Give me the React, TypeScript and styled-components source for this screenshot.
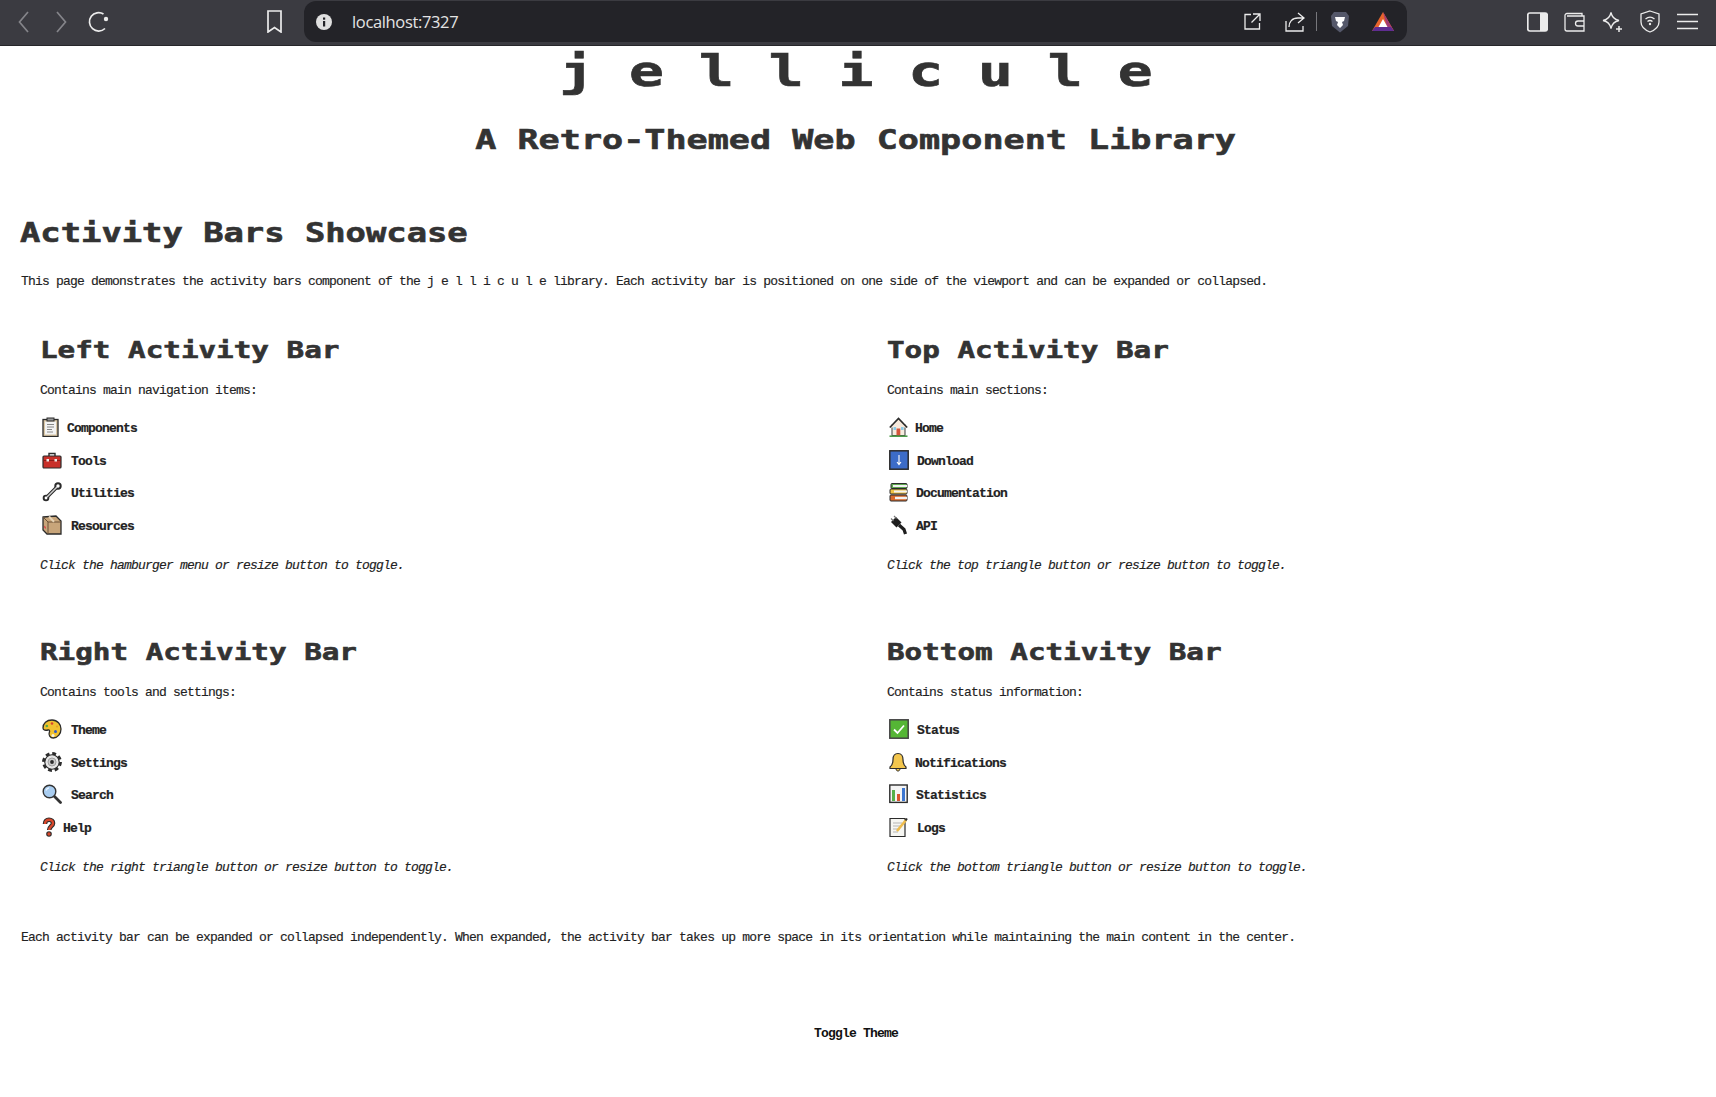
import React from "react";
import styled, { createGlobalStyle } from "styled-components";

const Global = createGlobalStyle`
  html, body { margin: 0; padding: 0; background: #fff; }
  body { font-family: "Liberation Mono", monospace; color: #222; }
`;

const Shell = styled.div`width: 1716px; min-height: 1097px; background: #fff; overflow: hidden;`;
const Toolbar = styled.header`
  height: 46px; box-sizing: border-box; background: #3b3b41; border-bottom: 1px solid #26262a; padding-bottom: 2px;
  display: flex; align-items: center; color: #e6e6e6;
`;
const Tool = styled.span<{ $w: number; $ml?: number; $dim?: boolean }>`
  display: flex; align-items: center; justify-content: center; flex: none;
  width: ${p => p.$w}px; margin-left: ${p => p.$ml ?? 0}px; color: ${p => (p.$dim ? "#85858a" : "#ececec")};
`;
const AddressBar = styled.div`
  flex: none; width: 1103px; height: 41px; margin-left: 21px; padding-right: 13px; box-sizing: border-box; background: #232328;
  border-radius: 12px; display: flex; align-items: center; color: #d8d8d8;
`;
const Url = styled.span`
  font: 16.5px "Open Sans", sans-serif; letter-spacing: -0.35px; color: #e4e4e4; margin-left: 20px; flex: 1;
`;
const Separator = styled.span`width: 1px; height: 19px; background: #77777c; margin-left: 11px; flex: none;`;

const Main = styled.main`display: flex; flex-direction: column; width: 1712px;`;
const Pixel = styled.span<{ $scale?: number; $origin?: string }>`
  display: inline-block; white-space: pre; transform: scaleX(${p => p.$scale ?? 1.3});
  transform-origin: ${p => p.$origin ?? "left"} center; -webkit-text-stroke: 0.6px #333;
`;
const Title = styled.h1`
  margin: 6px 0 0; height: 40px; text-align: center; color: #333;
  font: bold 42px/40px "DejaVu Sans Mono", monospace;
`;
const Subtitle = styled.h2`
  margin: 32px 0 0; height: 32px; text-align: center; color: #333;
  font: bold 27px/32px "DejaVu Sans Mono", monospace;
`;
const PageHeading = styled.h2`
  margin: 61px 0 0 20px; height: 32px; color: #333;
  font: bold 26px/32px "DejaVu Sans Mono", monospace;
`;
const Para = styled.p<{ $mt: number }>`
  margin: ${p => p.$mt}px 0 0 21px; height: 16px; white-space: pre; -webkit-text-stroke: 0.15px #222;
  font: 13px/16px "Liberation Mono", monospace; letter-spacing: -0.8px; color: #222;
`;
const Cards = styled.div`
  display: grid; grid-template-columns: 847px 847px; margin: 47px 0 0 20px; row-gap: 65px;
`;
const Card = styled.section`display: flex; flex-direction: column; padding-left: 20px;`;
const CardHeading = styled.h3`
  margin: 0; height: 26px; color: #333; font: bold 22.5px/26px "DejaVu Sans Mono", monospace;
`;
const CardText = styled.p`
  margin: 20px 0 0; height: 16px; white-space: pre; color: #222; -webkit-text-stroke: 0.15px #222;
  font: 13px/16px "Liberation Mono", monospace; letter-spacing: -0.8px;
`;
const List = styled.ul`list-style: none; margin: 14px 0 0; padding: 0;`;
const Row = styled.li`
  display: flex; align-items: center; height: 32.5px; color: #222; -webkit-text-stroke: 0.2px #222;
  font: bold 13px/16px "Liberation Mono", monospace; letter-spacing: -0.8px;
`;
const IconSlot = styled.span<{ $adv: number }>`
  display: flex; flex: none; width: ${p => p.$adv}px; padding-left: 2px; box-sizing: border-box; margin-top: -4px;
`;
const Note = styled.p`
  margin: 15px 0 0; height: 16px; white-space: pre; color: #222; -webkit-text-stroke: 0.15px #222;
  font: italic 13px/16px "Liberation Mono", monospace; letter-spacing: -0.8px;
`;
const ToggleWrap = styled.div`display: flex; justify-content: center; margin-top: 80px;`;
const Toggle = styled.button`
  border: 0; background: none; padding: 0; height: 16px; color: #111;
  font: bold 13px/16px "Liberation Mono", monospace; letter-spacing: -0.8px;
`;

const Svg = ({ children, w = 20, h = 20 }: { children: React.ReactNode; w?: number; h?: number }) => (
  <svg width={w} height={h} viewBox={`0 0 ${w} ${h}`} fill="none" style={{ display: "block" }}>{children}</svg>
);
const K = "#2b2b2b";

const Clipboard = () => <Svg w={17}><rect x="1" y="2.5" width="15" height="17" fill="#d9c6a5" stroke={K} strokeWidth="1.3" /><rect x="3" y="4.5" width="11" height="13" fill="#f3f3f3" /><rect x="5" y="1" width="7" height="3" fill="#999" stroke={K} /><path d="M5 7.5h7M5 10h7M5 12.5h5M5 15h6" stroke="#888" /></Svg>;
const Toolbox = () => <Svg><path d="M7 6V3.5h6V6" stroke={K} strokeWidth="1.4" /><rect x="1" y="6" width="18" height="12" rx="1" fill="#c8302a" stroke={K} strokeWidth="1.2" /><path d="M1 10.5h18" stroke="#8a1c18" /><rect x="4.5" y="9" width="2.5" height="2.5" fill="#eee" /><rect x="12.5" y="9" width="2.5" height="2.5" fill="#eee" /></Svg>;
const Wrench = () => <Svg><path d="M4.500 15.500 15.500 4.500" stroke={K} strokeWidth="3.600" strokeLinecap="round" /><circle cx="16" cy="4" r="3.700" fill={K} /><circle cx="4" cy="16" r="3.300" fill={K} /><path d="M5 15 15 5" stroke="#cfcfcf" strokeWidth="1.500" /><circle cx="16" cy="4" r="1.700" fill="#fff" /><circle cx="4" cy="16" r="1.400" fill="#fff" /></Svg>;
const Box = () => <Svg><path d="M1 2 14 1l5 5v13H5L1 15Z" fill="#c8a57a" stroke={K} strokeWidth="1.3" /><path d="M1 2l5 5h13M6 7v12" stroke="#6b5136" /><path d="M7 1.5 12 6.8" stroke="#e6d3b5" strokeWidth="2" /><path d="M2 10.5l2 1.5v2l-2-1.5Z" fill="#d9534f" /></Svg>;
const Home = () => <Svg w={19}><rect x="3" y="8" width="13" height="10.500" fill="#f6ecdf" stroke={K} strokeWidth=".9" /><path d="M.8 10.500 9.500 1.500 18.200 10.500" fill="#f6e9dc" stroke={K} strokeWidth="1.700" /><rect x="7.500" y="11.500" width="3.800" height="7" fill="#d4553a" /><rect x="4.500" y="10" width="2.600" height="3" fill="#8ccbe8" /><rect x="12" y="10" width="2.600" height="3" fill="#8ccbe8" /><path d="M.5 19.200h18" stroke="#4f9d4a" strokeWidth="1.600" /></Svg>;
const Download = () => <Svg><rect x=".8" y=".8" width="18.4" height="18.4" fill="#3c6cc8" stroke={K} strokeWidth="1.5" /><path d="M10 5v9M8 12l2 2.5 2-2.5" stroke="#fff" strokeWidth="1.1" /></Svg>;
const Books = () => <Svg w={19}><rect x="2" y="1.500" width="16" height="5" rx="1" fill="#5fa84f" stroke={K} /><rect x="4" y="3" width="14" height="2" fill="#f2f2f2" /><rect x="1" y="7" width="17" height="5" rx="1" fill="#f0c445" stroke={K} /><rect x="5" y="8.500" width="13" height="2" fill="#f2f2f2" /><rect x="1" y="13" width="17" height="6" rx="1" fill="#d96b2b" stroke={K} /><rect x="6" y="14.800" width="12" height="2.400" fill="#f2f2f2" /></Svg>;
const Plug = () => <Svg w={19}><path d="M4.500 4.500 10 10" stroke="#1e1e1e" strokeWidth="7" /><path d="M10 10 15 14.500 16.500 19" stroke="#1e1e1e" strokeWidth="3.200" /><path d="M2 3.500 4.500 6M5 1 7.500 3.500" stroke="#777" strokeWidth="1.200" /></Svg>;
const Palette = () => <Svg><path d="M10 1C4.500 1 1 4.500 1 9c0 2.500 3 2.500 5 2 1.500-.3 2 1 1.300 2.500-1 2.300.7 5.500 4 5.500 4.500 0 7.700-4.500 7.700-9S15.500 1 10 1Z" fill="#f2c230" stroke={K} strokeWidth="1.300" /><circle cx="10" cy="4.500" r="1.300" fill="#d9442f" /><circle cx="4.800" cy="7" r="1.300" fill="#56a84c" /><circle cx="15" cy="7.500" r="1.100" fill="#e8a327" /><circle cx="13.500" cy="12.500" r="1.500" fill="#3259c9" /><circle cx="11" cy="16.500" r="1.500" fill="#f7f3e5" /></Svg>;
const Gear = () => <Svg><circle cx="10" cy="10" r="8" stroke={K} strokeWidth="3.800" strokeDasharray="3.600 2.680" /><circle cx="10" cy="10" r="7.200" fill="#e6e6e6" stroke={K} strokeWidth="1.100" /><circle cx="10" cy="10" r="4" fill="#cdcdcd" stroke="#a0a0a0" /><circle cx="10" cy="10" r="1.900" fill={K} /></Svg>;
const Lens = () => <Svg><path d="M12.500 12.500 18.500 18.500" stroke="#333" strokeWidth="2.800" strokeLinecap="round" /><circle cx="7.500" cy="7.500" r="6.300" fill="#a9cdf0" stroke="#333" strokeWidth="1.400" /><path d="M4 6.500C4.500 5 5.500 4 7 3.800" stroke="#eaf4ff" strokeWidth="1.300" /></Svg>;
const Question = () => <Svg w={14}><path d="M3 7C3 4 4.500 2.800 7 2.800S11 4.200 11 6.200c0 2.800-3.800 3.300-3.800 6.800" stroke={K} strokeWidth="4.600" /><circle cx="7" cy="17" r="2.800" fill={K} /><path d="M3 7C3 4 4.500 2.800 7 2.800S11 4.200 11 6.200c0 2.800-3.800 3.300-3.800 6.800" stroke="#d9472b" strokeWidth="2.400" /><circle cx="7" cy="17" r="1.700" fill="#d9472b" /></Svg>;
const Check = () => <Svg><rect x=".8" y=".8" width="18.400" height="18.400" fill="#55b635" stroke="#444" strokeWidth="1.500" /><path d="M5 10.500 8.500 14 15 6.500" stroke="#fff" strokeWidth="1.800" /></Svg>;
const Bell = () => <Svg w={18}><path d="M9 1.500c-3.500 0-5 3-5 6 0 4-1 6-3 7.500v1.500h16V15c-2-1.500-3-3.500-3-7.500 0-3-1.500-6-5-6Z" fill="#f3c64d" stroke={K} strokeWidth="1.200" /><path d="M7 17c.3 1.500 1 2 2 2s1.700-.5 2-2" fill="#f3c64d" stroke={K} /></Svg>;
const Stats = () => <Svg w={19}><rect x=".8" y="1" width="17.400" height="17.400" fill="#f4f4f4" stroke={K} strokeWidth="1.400" /><rect x="3" y="6" width="3" height="11" fill="#55b04a" /><rect x="8" y="10" width="3" height="7" fill="#d9542f" /><rect x="13" y="4" width="3" height="13" fill="#3c76d0" /></Svg>;
const Memo = () => <Svg><path d="M1 1.500h15v18H1Z" fill="#f6f6f2" stroke={K} strokeWidth="1.200" /><path d="M4 6h9M4 9h9M4 12h7M4 15h5" stroke="#b5b5b5" /><path d="M8 14 17 3" stroke="#eebc4d" strokeWidth="2.600" /><path d="M16.500 3.500 18 1.500" stroke={K} strokeWidth="2" /></Svg>;

type Item = { label: string; icon: React.FC; adv: number };
const cards: { title: string; intro: string; items: Item[]; note: string }[] = [
  { title: "Left Activity Bar", intro: "Contains main navigation items:", note: "Click the hamburger menu or resize button to toggle.", items: [
    { label: "Components", icon: Clipboard, adv: 27 }, { label: "Tools", icon: Toolbox, adv: 31 }, { label: "Utilities", icon: Wrench, adv: 31 }, { label: "Resources", icon: Box, adv: 31 } ] },
  { title: "Top Activity Bar", intro: "Contains main sections:", note: "Click the top triangle button or resize button to toggle.", items: [
    { label: "Home", icon: Home, adv: 28 }, { label: "Download", icon: Download, adv: 30 }, { label: "Documentation", icon: Books, adv: 29 }, { label: "API", icon: Plug, adv: 29 } ] },
  { title: "Right Activity Bar", intro: "Contains tools and settings:", note: "Click the right triangle button or resize button to toggle.", items: [
    { label: "Theme", icon: Palette, adv: 31 }, { label: "Settings", icon: Gear, adv: 31 }, { label: "Search", icon: Lens, adv: 31 }, { label: "Help", icon: Question, adv: 23 } ] },
  { title: "Bottom Activity Bar", intro: "Contains status information:", note: "Click the bottom triangle button or resize button to toggle.", items: [
    { label: "Status", icon: Check, adv: 30 }, { label: "Notifications", icon: Bell, adv: 28 }, { label: "Statistics", icon: Stats, adv: 29 }, { label: "Logs", icon: Memo, adv: 30 } ] },
];

const stroke = { stroke: "currentColor", strokeWidth: 1.7, fill: "none" } as const;
const thin = { stroke: "currentColor", strokeWidth: 1.3, fill: "none" } as const;

export default function App() {
  return (
    <Shell>
      <Global />
      <Toolbar>
        <Tool $w={11} $ml={18} $dim><svg width="11" height="22" viewBox="0 0 11 22"><path d="M10 1 1.500 11 10 21" {...stroke} /></svg></Tool>
        <Tool $w={11} $ml={27} $dim><svg width="11" height="22" viewBox="0 0 11 22"><path d="M1 1 9.500 11 1 21" {...stroke} /></svg></Tool>
        <Tool $w={22} $ml={21}><svg width="22" height="22" viewBox="0 0 22 22"><path d="M17 17.500A9.200 9.200 0 1 1 15.500 3" {...stroke} /><circle cx="18" cy="8" r="2.200" fill="currentColor" /></svg></Tool>
        <Tool $w={17} $ml={156}><svg width="17" height="23" viewBox="0 0 17 23"><path d="M2 1h13v21l-6.500-4.500L2 22Z" {...stroke} /></svg></Tool>
        <AddressBar>
          <Tool $w={16} $ml={12}><svg width="16" height="16" viewBox="0 0 16 16"><circle cx="8" cy="8" r="8" fill="#e0e0e0" /><rect x="7" y="7" width="2.200" height="5.500" fill="#232328" /><rect x="7" y="3.500" width="2.200" height="2.200" fill="#232328" /></svg></Tool>
          <Url>localhost:7327</Url>
          <Tool $w={17}><svg width="17" height="17" viewBox="0 0 17 17"><path d="M7 1.500H1v14.500h14.500V10M9 1h7v7M16 1 7.500 9.500" {...thin} /></svg></Tool>
          <Tool $w={20} $ml={24}><svg width="20" height="20" viewBox="0 0 20 20"><path d="M1 9v10h17v-5M13 1l6 5-6 5M19 6h-6C7 6 4 10 4 15" {...thin} /></svg></Tool>
          <Separator />
          <Tool $w={20} $ml={13}><svg width="20" height="22" viewBox="0 0 20 22"><path d="M4 1h12l3 4-1 10-8 6.500L2 15 1 5Z" fill="#55586a" /><path d="M5 6h10l-1 4-2 1 1 3-3 3-3-3 1-3-2-1Z" fill="#fff" /></svg></Tool>
          <Tool $w={22} $ml={22}><svg width="22" height="20" viewBox="0 0 22 20"><path d="M11 0 22 19H0Z" fill="#e8642c" /><path d="M11 0 22 19H16Z" fill="#a23a73" /><path d="M0 19h22l-3-4H3Z" fill="#5f2d91" /><path d="M11 7l4.500 8h-9Z" fill="#fff" /></svg></Tool>
        </AddressBar>
        <Tool $w={21} $ml={120}><svg width="21" height="20" viewBox="0 0 21 20"><rect x=".8" y="1" width="19.400" height="18" rx="2" {...stroke} /><rect x="13" y="1" width="7" height="18" fill="currentColor" /></svg></Tool>
        <Tool $w={21} $ml={16}><svg width="21" height="20" viewBox="0 0 21 20"><path d="M18 4V1.500H3A2 2 0 0 0 1 3.500V17a2 2 0 0 0 2 2h17V4H3M20 9h-6a2.500 2.500 0 0 0 0 5h6" {...thin} /></svg></Tool>
        <Tool $w={21} $ml={17}><svg width="21" height="22" viewBox="0 0 21 22"><path d="M9 1.500c1 5 3 7 8 8-5 1-7 3-8 8-1-5-3-7-8-8 5-1 7-3 8-8Z" {...thin} /><path d="M17 15v6M14 18h6" stroke="currentColor" strokeWidth="1.500" /></svg></Tool>
        <Tool $w={20} $ml={17}><svg width="20" height="23" viewBox="0 0 20 23"><path d="M10 1 19 4v8c0 5-4 8-9 10-5-2-9-5-9-10V4Z" {...thin} /><path d="M5.500 9c3-2.500 6-2.500 9 0M7.500 11.500c1.500-1.200 3.500-1.200 5 0" {...thin} /><circle cx="10" cy="14" r="1.200" fill="currentColor" /></svg></Tool>
        <Tool $w={21} $ml={17}><svg width="21" height="17" viewBox="0 0 21 17"><path d="M0 1.500h21M0 8.500h21M0 15.500h21" {...stroke} /></svg></Tool>
      </Toolbar>
      <Main>
        <Title><Pixel $scale={1.38} $origin="center">j e l l i c u l e</Pixel></Title>
        <Subtitle><Pixel $origin="center">A Retro-Themed Web Component Library</Pixel></Subtitle>
        <PageHeading><Pixel>Activity Bars Showcase</Pixel></PageHeading>
        <Para $mt={25}>This page demonstrates the activity bars component of the j e l l i c u l e library. Each activity bar is positioned on one side of the viewport and can be expanded or collapsed.</Para>
        <Cards>
          {cards.map(card => (
            <Card key={card.title}>
              <CardHeading><Pixel>{card.title}</Pixel></CardHeading>
              <CardText>{card.intro}</CardText>
              <List>
                {card.items.map(({ label, icon: Icon, adv }) => (
                  <Row key={label}><IconSlot $adv={adv}><Icon /></IconSlot>{label}</Row>
                ))}
              </List>
              <Note>{card.note}</Note>
            </Card>
          ))}
        </Cards>
        <Para $mt={54}>Each activity bar can be expanded or collapsed independently. When expanded, the activity bar takes up more space in its orientation while maintaining the main content in the center.</Para>
        <ToggleWrap><Toggle>Toggle Theme</Toggle></ToggleWrap>
      </Main>
    </Shell>
  );
}
